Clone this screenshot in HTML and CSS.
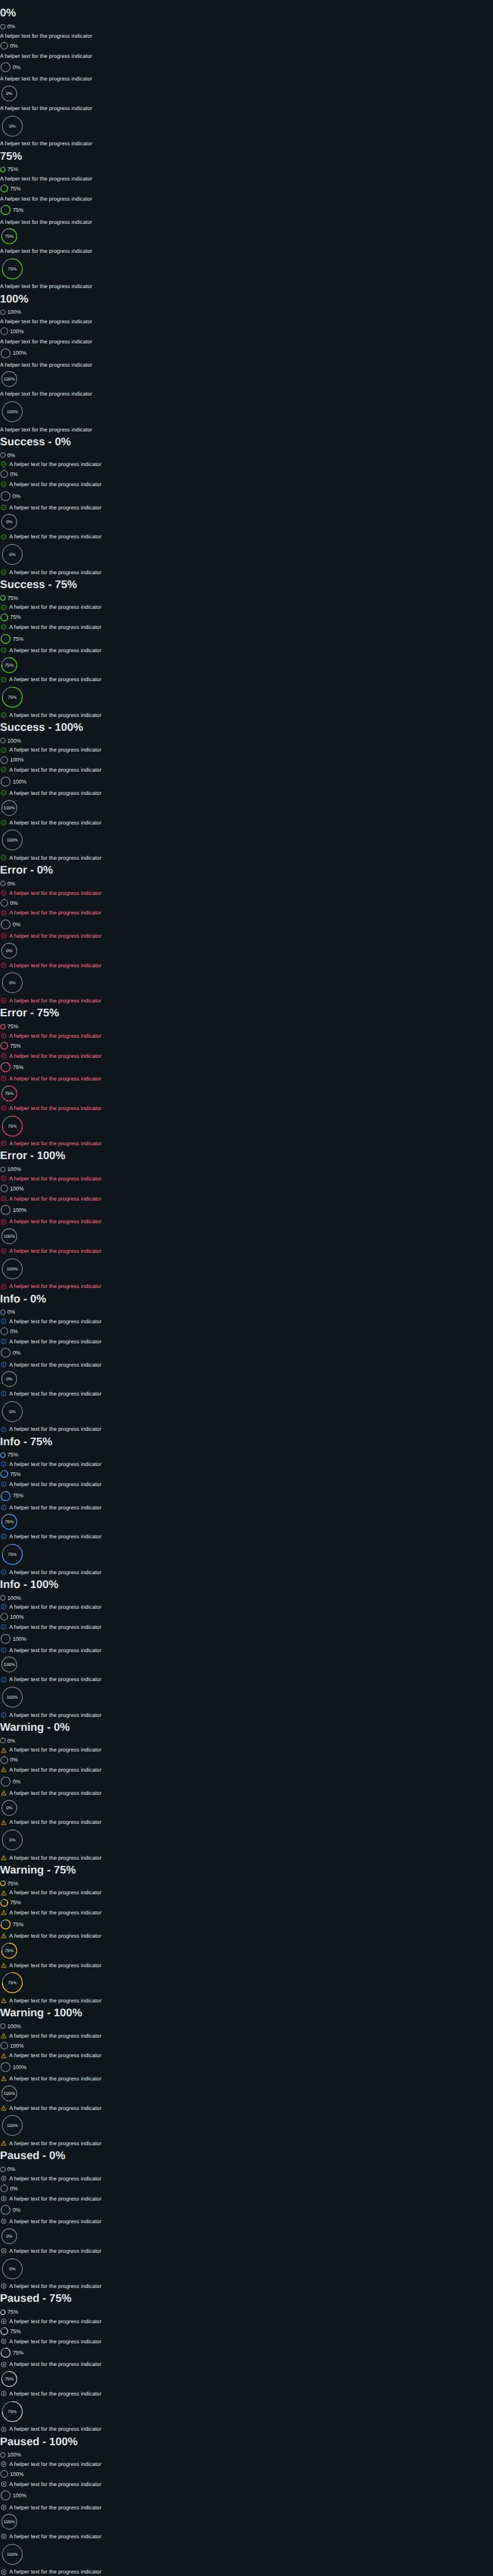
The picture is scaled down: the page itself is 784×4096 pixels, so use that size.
FILE: index.html
```html
<!DOCTYPE html>
<html lang="en">
<head>
<meta charset="utf-8">
<title>Progress indicator</title>
<link rel="stylesheet" href="styles.css">
</head>
<body>
<main class="page" id="page"></main>
<script src="main.js"></script>
</body>
</html>
```

FILE: styles.css
```css
:root {
  --u: 0.6125px;
  --track: #75858b;
  --text: #dfe5e7;
}
html, body { margin: 0; background: #0f1619; }
body {
  font-family: "Liberation Sans", Arial, sans-serif;
  font-size: calc(14 * var(--u));
  color: var(--text);
  text-rendering: geometricPrecision;
}
.page {
  box-sizing: border-box;
  height: 4096px;
  padding-top: calc(12.1 * var(--u));
  overflow: hidden;
}
.section { display: flex; flex-direction: column; }
.title {
  margin: 0;
  height: calc(42.88 * var(--u));
  font-size: calc(28.8 * var(--u));
  line-height: calc(44 * var(--u));
  font-weight: 700;
  white-space: nowrap;
}
.indicator { display: flex; align-items: center; gap: calc(4 * var(--u)); }
.xs { height: calc(28 * var(--u)); }
.sm { height: calc(32 * var(--u)); }
.md { height: calc(40 * var(--u)); }
.lg { height: calc(56 * var(--u)); }
.xl { height: calc(72 * var(--u)); }
.ring { display: block; flex: none; overflow: visible; }
.xs .ring { width: calc(15 * var(--u)); }
.sm .ring { width: calc(22 * var(--u)); }
.md .ring { width: calc(29 * var(--u)); }
.lg .ring { width: calc(48 * var(--u)); }
.xl .ring { width: calc(64 * var(--u)); }
.ring circle { fill: none; stroke-width: 2.1; }
.ring .track { stroke: var(--track); }
.ring .value { stroke: var(--accent); }
.ring text { fill: var(--text); font-size: 11.4px; text-anchor: middle; }
.helper {
  display: flex;
  align-items: center;
  height: calc(20 * var(--u));
  line-height: calc(20 * var(--u));
  white-space: nowrap;
  letter-spacing: calc(0.08 * var(--u));
}
.icon {
  flex: none;
  width: calc(16 * var(--u));
  height: calc(16 * var(--u));
  margin: 0 calc(6 * var(--u)) 0 calc(2 * var(--u));
  fill: none;
  stroke: var(--accent);
  stroke-width: 1.3;
}
.default, .success { --accent: #42c406; }
.error { --accent: #ff2456; }
.error .helper { color: #ff6f8c; }
.info { --accent: #3b82ff; }
.warning { --accent: #ffb905; }
.paused { --accent: #bebebe; }
```

FILE: main.js
```js
const states = ["", "Success", "Error", "Info", "Warning", "Paused"];
const values = [0, 75, 100];
const sizes = [
  { name: "xs", box: 15, r: 6.2 },
  { name: "sm", box: 22, r: 9 },
  { name: "md", box: 29, r: 11.9 },
  { name: "lg", box: 48, r: 19.5, inside: true },
  { name: "xl", box: 64, r: 26, inside: true },
];
const icons = {
  Success: '<circle cx="8" cy="8" r="6.3"/><path d="M5.2 8.1l2 2 3.7-3.8"/>',
  Error: '<circle cx="8" cy="8" r="6.3"/><path d="M6.1 6.1l3.8 3.8M9.9 6.1l-3.8 3.8"/>',
  Info: '<circle cx="8" cy="8" r="6.3"/><path d="M8 4.6v1.5M7 7.6h1.1v3.9"/>',
  Warning: '<path d="M8 2L14.2 13.6H1.8Z"/><path d="M8 6v3.6M8 10.4v1.5"/>',
  Paused: '<circle cx="8" cy="8" r="6.3"/><path d="M6.7 5v6M9.3 5v6"/>',
};

function ring(size, value) {
  const c = size.box / 2;
  const len = 2 * Math.PI * size.r;
  // At zero, some sizes keep a small dot at twelve o'clock; a full ring shows only its track.
  let arc = "";
  if (value === 75) {
    arc = `<circle class="value" cx="${c}" cy="${c}" r="${size.r}" stroke-dasharray="${len * 0.75} ${len}" transform="rotate(-90 ${c} ${c})"/>`;
  } else if (value === 0 && size.name !== "md" && size.name !== "lg") {
    arc = `<circle class="value" cx="${c}" cy="${c}" r="${size.r}" stroke-dasharray="2 ${len}" transform="rotate(${-90 - 57.3 / size.r} ${c} ${c})"/>`;
  }
  const label = size.inside ? `<text x="${c}" y="${c + 4}">${value}%</text>` : "";
  return `<svg class="ring" viewBox="0 0 ${size.box} ${size.box}"><circle class="track" cx="${c}" cy="${c}" r="${size.r}"/>${arc}${label}</svg>`;
}

document.getElementById("page").innerHTML = states.map(state => values.map(value => {
  const icon = state ? `<svg class="icon" viewBox="0 0 16 16">${icons[state]}</svg>` : "";
  const rows = sizes.map(size =>
    `<div class="indicator ${size.name}">${ring(size, value)}${size.inside ? "" : `<span class="label">${value}%</span>`}</div>` +
    `<div class="helper">${icon}<span>A helper text for the progress indicator</span></div>`
  ).join("");
  const title = state ? `${state} - ${value}%` : `${value}%`;
  return `<section class="section ${state.toLowerCase() || "default"}"><h1 class="title">${title}</h1>${rows}</section>`;
}).join("")).join("");
```
